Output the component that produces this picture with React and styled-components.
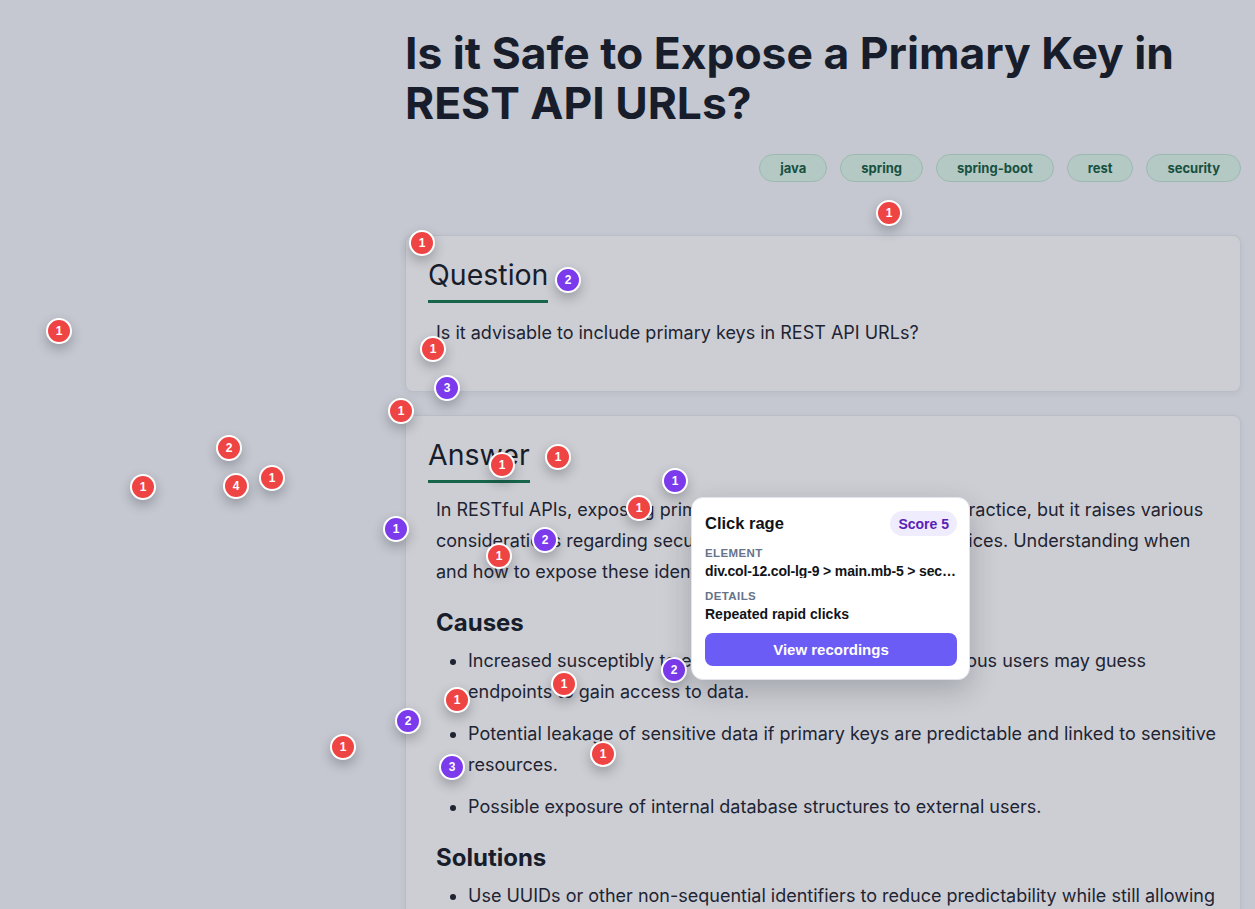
import React from 'react';
import styled, { createGlobalStyle } from 'styled-components';

const GlobalStyle = createGlobalStyle`
  html, body {
    margin: 0;
    padding: 0;
    background: #c5c8d0;
  }
  body {
    font-family: Inter, "Noto Sans", sans-serif;
    color: #1b2130;
  }
  * {
    box-sizing: border-box;
  }
`;

const tags = ['java', 'spring', 'spring-boot', 'rest', 'security'];

const markers = [
  { x: 889, y: 213, n: 1, tone: 'red' },
  { x: 422, y: 243, n: 1, tone: 'red' },
  { x: 433, y: 349, n: 1, tone: 'red' },
  { x: 59, y: 331, n: 1, tone: 'red' },
  { x: 401, y: 411, n: 1, tone: 'red' },
  { x: 229, y: 448, n: 2, tone: 'red' },
  { x: 143, y: 487, n: 1, tone: 'red' },
  { x: 236, y: 486, n: 4, tone: 'red' },
  { x: 272, y: 478, n: 1, tone: 'red' },
  { x: 502, y: 465, n: 1, tone: 'red' },
  { x: 558, y: 457, n: 1, tone: 'red' },
  { x: 639, y: 508, n: 1, tone: 'red' },
  { x: 499, y: 556, n: 1, tone: 'red' },
  { x: 564, y: 684, n: 1, tone: 'red' },
  { x: 457, y: 700, n: 1, tone: 'red' },
  { x: 343, y: 747, n: 1, tone: 'red' },
  { x: 603, y: 754, n: 1, tone: 'red' },
  { x: 568, y: 280, n: 2, tone: 'purple' },
  { x: 447, y: 388, n: 3, tone: 'purple' },
  { x: 675, y: 481, n: 1, tone: 'purple' },
  { x: 396, y: 529, n: 1, tone: 'purple' },
  { x: 545, y: 540, n: 2, tone: 'purple' },
  { x: 674, y: 670, n: 2, tone: 'purple' },
  { x: 408, y: 721, n: 2, tone: 'purple' },
  { x: 452, y: 767, n: 3, tone: 'purple' },
];

const Layout = styled.div`
  display: grid;
  grid-template-columns: 390px 1fr;
  column-gap: 15px;
  padding-right: 14px;
`;

const Aside = styled.aside``;

const Main = styled.main`
  display: flex;
  flex-direction: column;
  padding-top: 28px;
`;

const Title = styled.h1`
  margin: 0;
  font-size: 44.4px;
  line-height: 50px;
  font-weight: 700;
  color: #181d2c;
`;

const TagRow = styled.div`
  display: flex;
  justify-content: flex-end;
  gap: 13px;
  margin-top: 26px;
  margin-bottom: 53px;
`;

const Tag = styled.span`
  display: inline-flex;
  align-items: center;
  height: 28px;
  padding: 0 20px;
  border-radius: 14px;
  border: 1px solid #9dbab2;
  background: #b4c8c4;
  color: #17513f;
  font-size: 13px;
  font-weight: 700;
`;

const Card = styled.section`
  background: #cdced3;
  border: 1px solid #b9bdc7;
  border-radius: 8px;
  padding: 22px 22px 20px 22px;
  box-shadow: 0 2px 6px rgba(30, 35, 50, 0.06);
  & + & {
    margin-top: 23px;
  }
`;

const CardHeading = styled.h2`
  display: inline-block;
  margin: 0;
  padding-bottom: 8px;
  border-bottom: 3px solid #17664b;
  font-size: 28.5px;
  line-height: 34px;
  font-weight: 400;
  color: #181d2c;
`;

const CardBody = styled.div`
  padding: ${({ $top }) => $top}px 0 0 8px;
  font-size: 18px;
  line-height: 31px;
  color: #1e2433;
`;

const Para = styled.p`
  margin: 0 0 ${({ $bottom }) => $bottom || 0}px;
`;

const SubHeading = styled.h3`
  margin: 22px 0 7px;
  font-size: 24px;
  line-height: 1.2;
  font-weight: 700;
  color: #181d2c;
`;

const List = styled.ul`
  margin: 0;
  padding-left: 32px;
`;

const Item = styled.li`
  margin-bottom: 11px;
`;

const MarkerLayer = styled.div`
  position: absolute;
  inset: 0;
  pointer-events: none;
`;

const Marker = styled.span.attrs(({ $x, $y }) => ({
  style: { left: `${$x - 13}px`, top: `${$y - 13}px` },
}))`
  position: absolute;
  width: 26px;
  height: 26px;
  border-radius: 50%;
  border: 2px solid #ffffff;
  background: ${({ $tone }) => ($tone === 'red' ? '#ef4444' : '#7c3aed')};
  color: #ffffff;
  display: flex;
  align-items: center;
  justify-content: center;
  font-family: "Liberation Sans", Arial, sans-serif;
  font-size: 12px;
  font-weight: 700;
  box-shadow: 0 5px 12px rgba(20, 25, 40, 0.28);
`;

const Popover = styled.div`
  position: absolute;
  left: 691px;
  top: 497px;
  width: 279px;
  padding: 13px 12px 13px 13px;
  background: #ffffff;
  border: 1px solid #e3e5ea;
  border-radius: 12px;
  box-shadow: 0 10px 28px rgba(15, 23, 42, 0.22);
  font-family: "Liberation Sans", Arial, sans-serif;
  color: #111318;
`;

const PopHeader = styled.div`
  display: flex;
  align-items: center;
  justify-content: space-between;
  margin-bottom: 11px;
`;

const PopTitle = styled.span`
  font-size: 16.5px;
  font-weight: 700;
`;

const ScorePill = styled.span`
  display: inline-flex;
  align-items: center;
  height: 25px;
  padding: 0 8px;
  border-radius: 13px;
  background: #efecfd;
  color: #5b21b6;
  font-size: 14px;
  font-weight: 700;
`;

const FieldLabel = styled.div`
  font-size: 11.5px;
  line-height: 13px;
  font-weight: 700;
  letter-spacing: 0.4px;
  color: #667389;
  margin-bottom: 4px;
`;

const FieldValue = styled.div`
  font-size: 14px;
  line-height: 14px;
  font-weight: 700;
  letter-spacing: ${({ $tight }) => ($tight ? '-0.15px' : '0')};
  white-space: nowrap;
  overflow: hidden;
  text-overflow: ellipsis;
  margin-bottom: ${({ $bottom }) => $bottom}px;
`;

const ActionButton = styled.button`
  display: block;
  width: 100%;
  height: 33px;
  border: none;
  border-radius: 8px;
  background: #6c5cf6;
  color: #ffffff;
  font-family: "Liberation Sans", Arial, sans-serif;
  font-size: 15px;
  font-weight: 700;
  cursor: pointer;
`;

const Page = styled.div`
  position: relative;
  min-height: 909px;
`;

export default function App() {
  return (
    <Page>
      <GlobalStyle />
      <Layout>
        <Aside />
        <Main>
          <Title>Is it Safe to Expose a Primary Key in REST API URLs?</Title>
          <TagRow>
            {tags.map((t) => (
              <Tag key={t}>{t}</Tag>
            ))}
          </TagRow>

          <Card>
            <CardHeading>Question</CardHeading>
            <CardBody $top={14}>
              <Para $bottom={23}>
                Is it advisable to include primary keys in REST API URLs?
              </Para>
            </CardBody>
          </Card>

          <Card>
            <CardHeading>Answer</CardHeading>
            <CardBody $top={11}>
              <Para>
                In RESTful APIs, exposing primary keys in URLs is a common
                practice, but it raises various considerations regarding
                security, data privacy, and best practices. Understanding when
                and how to expose these identifiers is crucial.
              </Para>
              <SubHeading>Causes</SubHeading>
              <List>
                <Item>
                  Increased susceptibly to enumeration attacks where malicious
                  users may guess endpoints to gain access to data.
                </Item>
                <Item>
                  Potential leakage of sensitive data if primary keys are
                  predictable and linked to sensitive resources.
                </Item>
                <Item>
                  Possible exposure of internal database structures to external
                  users.
                </Item>
              </List>
              <SubHeading>Solutions</SubHeading>
              <List>
                <Item>
                  Use UUIDs or other non-sequential identifiers to reduce
                  predictability while still allowing unique resource
                  identification.
                </Item>
                <Item>
                  Implement proper authorization checks on every endpoint that
                  accepts an identifier.
                </Item>
              </List>
            </CardBody>
          </Card>
        </Main>
      </Layout>

      <MarkerLayer>
        {markers.map((m, i) => (
          <Marker key={i} $x={m.x} $y={m.y} $tone={m.tone}>
            {m.n}
          </Marker>
        ))}
      </MarkerLayer>

      <Popover>
        <PopHeader>
          <PopTitle>Click rage</PopTitle>
          <ScorePill>Score 5</ScorePill>
        </PopHeader>
        <FieldLabel>ELEMENT</FieldLabel>
        <FieldValue $bottom={12} $tight>
          div.col-12.col-lg-9 &gt; main.mb-5 &gt; section.card &gt; div.card-body
        </FieldValue>
        <FieldLabel>DETAILS</FieldLabel>
        <FieldValue $bottom={12}>Repeated rapid clicks</FieldValue>
        <ActionButton>View recordings</ActionButton>
      </Popover>
    </Page>
  );
}
